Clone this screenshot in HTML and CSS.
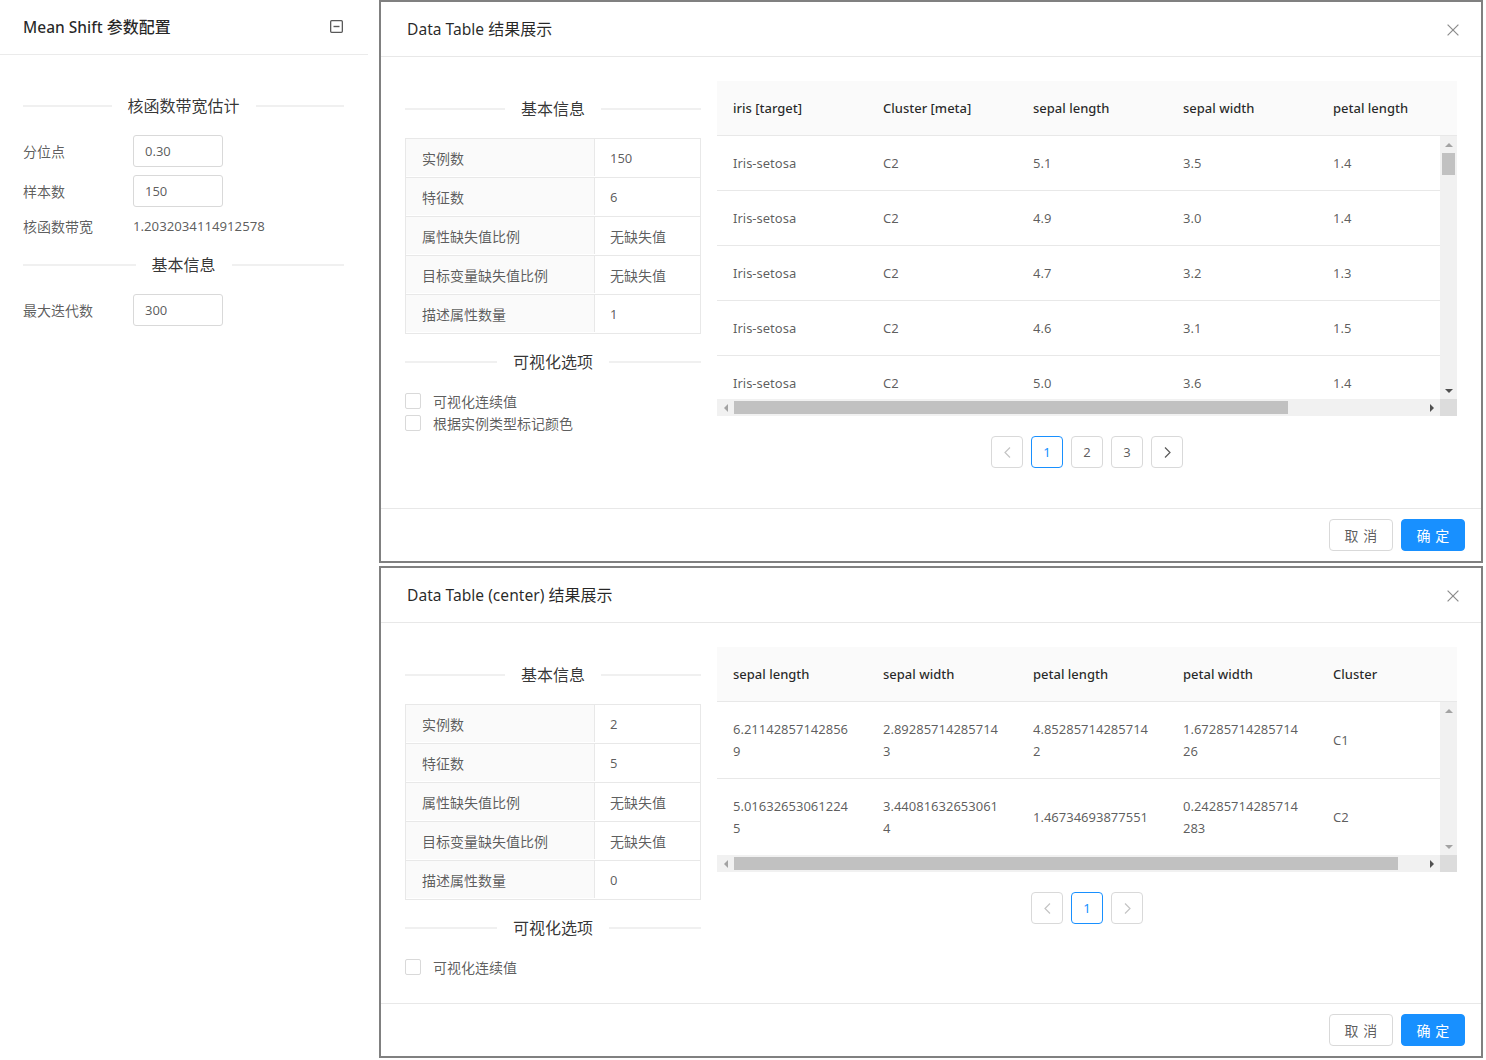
FILE: index.html
```html
<!DOCTYPE html>
<html lang="zh-CN">
<head>
<meta charset="utf-8">
<title>Mean Shift 参数配置</title>
<link rel="stylesheet" href="styles.css">
</head>
<body>
<div class="page">
  <aside class="panel">
    <div class="panel-head">
      <span class="panel-title"><span class="lat">Mean Shift</span> 参数配置</span>
      <svg class="collapse" width="13" height="13" viewBox="0 0 13 13"><rect x="0.65" y="0.65" width="11.7" height="11.7" rx="1" fill="none" stroke="#595959" stroke-width="1.3"/><line x1="3.5" y1="6.5" x2="9.5" y2="6.5" stroke="#595959" stroke-width="1.4"/></svg>
    </div>
    <div class="panel-body">
      <div class="divider"><span>核函数带宽估计</span></div>
      <div class="form-row"><label class="flabel">分位点</label><div class="input">0.30</div></div>
      <div class="form-row"><label class="flabel">样本数</label><div class="input">150</div></div>
      <div class="form-row text"><label class="flabel">核函数带宽</label><span class="val">1.2032034114912578</span></div>
      <div class="divider"><span>基本信息</span></div>
      <div class="form-row"><label class="flabel">最大迭代数</label><div class="input">300</div></div>
    </div>
  </aside>

  <main class="modals">
    <section class="modal">
      <header class="modal-head">
        <span class="modal-title"><span class="lat">Data Table</span> 结果展示</span>
        <span class="close"><svg width="12" height="12" viewBox="0 0 12 12"><path d="M0.6 0.6 L11.4 11.4 M11.4 0.6 L0.6 11.4" stroke="#8c8c8c" stroke-width="1.2" fill="none"/></svg></span>
      </header>
      <div class="modal-body">
        <div class="info-col">
          <div class="divider"><span>基本信息</span></div>
          <div class="desc">
            <div class="desc-row"><div class="dt">实例数</div><div class="dd">150</div></div>
            <div class="desc-row"><div class="dt">特征数</div><div class="dd">6</div></div>
            <div class="desc-row"><div class="dt">属性缺失值比例</div><div class="dd cjk">无缺失值</div></div>
            <div class="desc-row"><div class="dt">目标变量缺失值比例</div><div class="dd cjk">无缺失值</div></div>
            <div class="desc-row"><div class="dt">描述属性数量</div><div class="dd">1</div></div>
          </div>
          <div class="divider"><span>可视化选项</span></div>
          <div class="checks">
            <div class="check"><span class="box"></span><span>可视化连续值</span></div>
            <div class="check"><span class="box"></span><span>根据实例类型标记颜色</span></div>
          </div>
        </div>
        <div class="table-col">
          <div class="dtable">
            <div class="thead">
              <div class="th">iris [target]</div>
              <div class="th">Cluster [meta]</div>
              <div class="th">sepal length</div>
              <div class="th">sepal width</div>
              <div class="th">petal length</div>
            </div>
            <div class="tview">
              <div class="tbody tall">
                <div class="tr"><div class="td">Iris-setosa</div><div class="td">C2</div><div class="td">5.1</div><div class="td">3.5</div><div class="td">1.4</div></div>
                <div class="tr"><div class="td">Iris-setosa</div><div class="td">C2</div><div class="td">4.9</div><div class="td">3.0</div><div class="td">1.4</div></div>
                <div class="tr"><div class="td">Iris-setosa</div><div class="td">C2</div><div class="td">4.7</div><div class="td">3.2</div><div class="td">1.3</div></div>
                <div class="tr"><div class="td">Iris-setosa</div><div class="td">C2</div><div class="td">4.6</div><div class="td">3.1</div><div class="td">1.5</div></div>
                <div class="tr"><div class="td">Iris-setosa</div><div class="td">C2</div><div class="td">5.0</div><div class="td">3.6</div><div class="td">1.4</div></div>
              </div>
              <div class="vscroll">
                <div class="sbtn"><span class="tri up off"></span></div>
                <div class="vthumb"></div>
                <div class="vspace"></div>
                <div class="sbtn"><span class="tri down"></span></div>
              </div>
            </div>
            <div class="hscroll">
              <div class="htrack">
                <div class="sbtn"><span class="tri left off"></span></div>
                <div class="hthumb" style="width:554px"></div>
                <div class="hspace"></div>
                <div class="sbtn"><span class="tri right"></span></div>
              </div>
              <div class="corner"></div>
            </div>
          </div>
          <nav class="pager">
            <span class="pg off"><svg width="7" height="11" viewBox="0 0 7 11"><polyline points="6,0.5 1,5.5 6,10.5" fill="none" stroke="#c4c4c4" stroke-width="1.2"/></svg></span>
            <span class="pg active">1</span>
            <span class="pg">2</span>
            <span class="pg">3</span>
            <span class="pg"><svg width="7" height="11" viewBox="0 0 7 11"><polyline points="1,0.5 6,5.5 1,10.5" fill="none" stroke="#595959" stroke-width="1.2"/></svg></span>
          </nav>
        </div>
      </div>
      <footer class="modal-foot">
        <button class="btn">取消</button>
        <button class="btn primary">确定</button>
      </footer>
    </section>

    <section class="modal">
      <header class="modal-head">
        <span class="modal-title"><span class="lat">Data Table (center)</span> 结果展示</span>
        <span class="close"><svg width="12" height="12" viewBox="0 0 12 12"><path d="M0.6 0.6 L11.4 11.4 M11.4 0.6 L0.6 11.4" stroke="#8c8c8c" stroke-width="1.2" fill="none"/></svg></span>
      </header>
      <div class="modal-body">
        <div class="info-col">
          <div class="divider"><span>基本信息</span></div>
          <div class="desc">
            <div class="desc-row"><div class="dt">实例数</div><div class="dd">2</div></div>
            <div class="desc-row"><div class="dt">特征数</div><div class="dd">5</div></div>
            <div class="desc-row"><div class="dt">属性缺失值比例</div><div class="dd cjk">无缺失值</div></div>
            <div class="desc-row"><div class="dt">目标变量缺失值比例</div><div class="dd cjk">无缺失值</div></div>
            <div class="desc-row"><div class="dt">描述属性数量</div><div class="dd">0</div></div>
          </div>
          <div class="divider"><span>可视化选项</span></div>
          <div class="checks">
            <div class="check"><span class="box"></span><span>可视化连续值</span></div>
          </div>
        </div>
        <div class="table-col">
          <div class="dtable">
            <div class="thead">
              <div class="th">sepal length</div>
              <div class="th">sepal width</div>
              <div class="th">petal length</div>
              <div class="th">petal width</div>
              <div class="th">Cluster</div>
            </div>
            <div class="tview">
              <div class="tbody short">
                <div class="tr"><div class="td">6.21142857142856<br>9</div><div class="td">2.89285714285714<br>3</div><div class="td">4.85285714285714<br>2</div><div class="td">1.67285714285714<br>26</div><div class="td">C1</div></div>
                <div class="tr"><div class="td">5.01632653061224<br>5</div><div class="td">3.44081632653061<br>4</div><div class="td">1.46734693877551</div><div class="td">0.24285714285714<br>283</div><div class="td">C2</div></div>
              </div>
              <div class="vscroll">
                <div class="sbtn"><span class="tri up off"></span></div>
                <div class="vspace"></div>
                <div class="sbtn"><span class="tri down off"></span></div>
              </div>
            </div>
            <div class="hscroll">
              <div class="htrack">
                <div class="sbtn"><span class="tri left off"></span></div>
                <div class="hthumb" style="width:664px"></div>
                <div class="hspace"></div>
                <div class="sbtn"><span class="tri right"></span></div>
              </div>
              <div class="corner"></div>
            </div>
          </div>
          <nav class="pager">
            <span class="pg off"><svg width="7" height="11" viewBox="0 0 7 11"><polyline points="6,0.5 1,5.5 6,10.5" fill="none" stroke="#c4c4c4" stroke-width="1.2"/></svg></span>
            <span class="pg active">1</span>
            <span class="pg off"><svg width="7" height="11" viewBox="0 0 7 11"><polyline points="1,0.5 6,5.5 1,10.5" fill="none" stroke="#c4c4c4" stroke-width="1.2"/></svg></span>
          </nav>
        </div>
      </div>
      <footer class="modal-foot">
        <button class="btn">取消</button>
        <button class="btn primary">确定</button>
      </footer>
    </section>
  </main>
</div>
</body>
</html>
```

FILE: styles.css
```css
* { box-sizing: border-box; margin: 0; padding: 0; }

body {
  margin: 0;
  background: #fff;
  font-family: "Noto Sans", "Noto Sans CJK SC", sans-serif;
  font-size: 14px;
  color: rgba(0, 0, 0, 0.65);
}

.page {
  display: flex;
  align-items: flex-start;
}

/* ---------- left panel ---------- */
.panel {
  width: 368px;
  flex: none;
}

.panel-head {
  height: 55px;
  display: flex;
  align-items: center;
  justify-content: space-between;
  padding: 0 25px 2px 23px;
  border-bottom: 1px solid #ebebeb;
}

.panel-title {
  font-size: 16px;
  font-weight: 500;
  color: rgba(0, 0, 0, 0.85);
}

.panel-title .lat { font-size: 15.5px; }

.collapse { display: block; }

.panel-body {
  padding: 23px 24px 0 23px;
}

.divider {
  display: flex;
  align-items: center;
  height: 24px;
  margin: 16px 0 17px;
  font-size: 16px;
  color: rgba(0, 0, 0, 0.8);
  white-space: nowrap;
}

.divider::before,
.divider::after {
  content: "";
  flex: 1;
  height: 2px;
  background: #f0f0f0;
}

.divider span {
  padding: 0 16px;
  line-height: 24px;
}

.form-row {
  display: grid;
  grid-template-columns: 110px 90px;
  align-items: center;
  margin-bottom: 8px;
}

.form-row.text { height: 22px; grid-template-columns: 110px auto; }

.flabel {
  font-size: 14px;
  color: rgba(0, 0, 0, 0.65);
}

.input {
  height: 32px;
  border: 1px solid #d9d9d9;
  border-radius: 3px;
  padding: 0 11px;
  line-height: 30px;
  font-size: 13px;
  color: rgba(0, 0, 0, 0.65);
}

.val {
  font-size: 13.2px;
  color: rgba(0, 0, 0, 0.65);
}

/* ---------- modals ---------- */
.modals {
  margin-left: 11px;
  width: 1104px;
  flex: none;
  display: flex;
  flex-direction: column;
  gap: 3px;
}

.modal {
  border: 2px solid #808080;
  background: #fff;
}

.modal-head {
  height: 55px;
  border-bottom: 1px solid #e8e8e8;
  display: flex;
  align-items: center;
  justify-content: space-between;
  padding: 0 0 2px 26px;
}

.modal-title {
  font-size: 16px;
  color: rgba(0, 0, 0, 0.85);
}

.modal-title .lat { font-size: 15.6px; }

.close {
  width: 56px;
  height: 52px;
  display: flex;
  align-items: center;
  justify-content: center;
  padding-top: 3px;
}

.modal-body {
  display: flex;
  align-items: flex-start;
  gap: 16px;
  padding: 24px;
}

.info-col {
  width: 296px;
  flex: none;
}

.desc {
  border: 1px solid #e8e8e8;
  border-bottom: 0;
}

.desc-row {
  display: flex;
  height: 39px;
  border-bottom: 1px solid #e8e8e8;
  padding-bottom: 1px;
}

.dt {
  width: 189px;
  flex: none;
  background: #fafafa;
  border-right: 1px solid #e8e8e8;
  padding-left: 16px;
  display: flex;
  align-items: center;
  font-size: 14px;
}

.dd {
  flex: 1;
  padding-left: 15px;
  display: flex;
  align-items: center;
  font-size: 13px;
}

.dd.cjk { font-size: 14px; }

.checks { display: flex; flex-direction: column; margin-top: -1px; margin-bottom: 1px; }

.check {
  display: flex;
  align-items: center;
  height: 22px;
  gap: 12px;
  font-size: 14px;
}

.box {
  width: 16px;
  height: 16px;
  border: 1px solid #d9d9d9;
  border-radius: 2px;
  background: #fff;
}

/* ---------- data table ---------- */
.table-col {
  width: 740px;
  flex: none;
}

.thead {
  display: flex;
  overflow: hidden;
  background: #fafafa;
  border-bottom: 1px solid #e8e8e8;
}

.th {
  width: 150px;
  flex: none;
  padding: 16px;
  line-height: 22px;
  font-size: 13px;
  font-weight: 500;
  color: rgba(0, 0, 0, 0.85);
  white-space: nowrap;
}

.tview { display: flex; }

.tbody {
  width: 723px;
  overflow: hidden;
}

.tbody.tall { height: 263px; }
.tbody.short { height: 153px; }

.tr {
  display: flex;
  align-items: center;
  width: 750px;
  border-bottom: 1px solid #e8e8e8;
}

.td {
  width: 150px;
  flex: none;
  padding: 16px;
  line-height: 22px;
  font-size: 13px;
  color: rgba(0, 0, 0, 0.65);
}

.vscroll {
  width: 17px;
  flex: none;
  background: #f1f1f1;
  display: flex;
  flex-direction: column;
}

.sbtn {
  width: 17px;
  height: 17px;
  flex: none;
  display: flex;
  align-items: center;
  justify-content: center;
}

.vthumb {
  width: 13px;
  height: 22px;
  margin-left: 2px;
  background: #c1c1c1;
  flex: none;
}

.vspace, .hspace { flex: 1; }

.hscroll {
  display: flex;
  height: 17px;
}

.htrack {
  width: 723px;
  display: flex;
  align-items: center;
  background: #f1f1f1;
}

.hthumb {
  height: 13px;
  background: #c1c1c1;
  flex: none;
}

.corner {
  width: 17px;
  background: #dcdcdc;
}

.tri { width: 0; height: 0; display: block; }
.tri.up { border-left: 4px solid transparent; border-right: 4px solid transparent; border-bottom: 4px solid #505050; }
.tri.down { border-left: 4px solid transparent; border-right: 4px solid transparent; border-top: 4px solid #505050; }
.tri.left { border-top: 4px solid transparent; border-bottom: 4px solid transparent; border-right: 4px solid #505050; }
.tri.right { border-top: 4px solid transparent; border-bottom: 4px solid transparent; border-left: 4px solid #505050; }
.tri.up.off { border-bottom-color: #a3a3a3; }
.tri.down.off { border-top-color: #a3a3a3; }
.tri.left.off { border-right-color: #a3a3a3; }

/* ---------- pagination ---------- */
.pager {
  display: flex;
  justify-content: center;
  gap: 8px;
  margin: 20px 0 16px;
}

.pg {
  width: 32px;
  height: 32px;
  border: 1px solid #d9d9d9;
  border-radius: 4px;
  display: flex;
  align-items: center;
  justify-content: center;
  font-size: 13px;
  color: rgba(0, 0, 0, 0.65);
  background: #fff;
}

.pg.active {
  border-color: #1890ff;
  color: #1890ff;
}

/* ---------- footer ---------- */
.modal-foot {
  border-top: 1px solid #e8e8e8;
  padding: 10px 16px;
  display: flex;
  justify-content: flex-end;
  gap: 8px;
}

.btn {
  width: 64px;
  height: 32px;
  border: 1px solid #d9d9d9;
  border-radius: 4px;
  background: #fff;
  font-family: inherit;
  font-size: 14px;
  color: rgba(0, 0, 0, 0.65);
  letter-spacing: 0.34em;
  padding-left: 0.34em;
}

.btn.primary {
  background: #1890ff;
  border-color: #1890ff;
  color: #fff;
}
```
